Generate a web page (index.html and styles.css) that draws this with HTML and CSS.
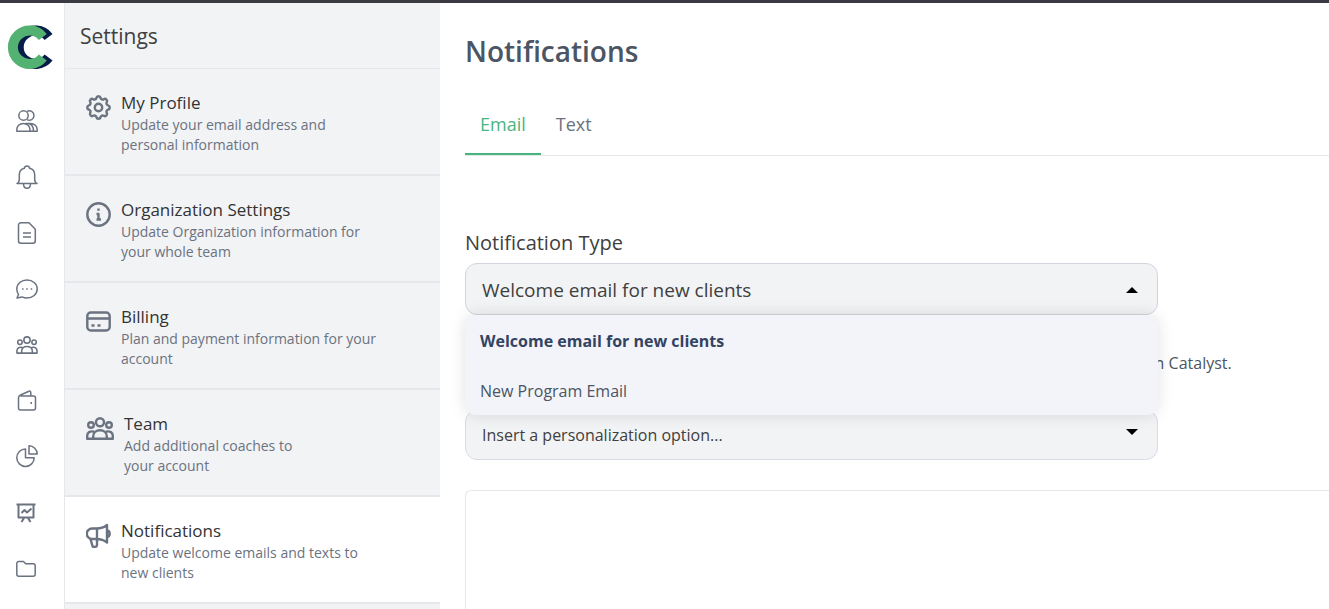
FILE: index.html
```html
<!DOCTYPE html>
<html lang="en">
<head>
<meta charset="UTF-8">
<meta name="viewport" content="width=device-width, initial-scale=1.0">
<title>Settings - Notifications</title>
<link rel="stylesheet" href="styles.css">
</head>
<body>
<div class="app">
    <!-- Icon rail -->
    <nav class="rail">
        <a href="#" class="logo" aria-label="Catalyst">
            <svg width="46" height="46" viewBox="0 0 46 46" fill="none" stroke-width="10">
                <path stroke="#061c49" d="M41.6 12a16.7 16.7 0 1 0 0 20.5"/>
                <path stroke="#53b171" d="M35.8 12a16.7 16.7 0 1 0 0 20.5"/>
            </svg>
        </a>
        <a href="#" aria-label="Clients">
            <svg class="icon" viewBox="0 0 22 22"><circle cx="7.5" cy="5.5" r="4.7"/><path d="M11 1.4a4.7 4.7 0 1 1 0 8.2M.8 21.2v-1.5c0-3.5 2.7-6.2 6.5-6.2s6.7 2.7 6.7 6.2v1.5zM9.5 13.5h5c3.8 0 6.7 2.7 6.7 6.2v1.5H14M12.5 13.5c3.4.8 5 3 5 7.5"/></svg>
        </a>
        <a href="#" aria-label="Alerts">
            <svg class="icon" viewBox="0 0 22 22"><path d="M1 17.5h20c-1.7-.8-2.3-2-2.3-4V9c0-3.6-2-6-5-6.7C13.5.8 12.5 0 11 0S8.5.8 8.3 2.3C5.3 3 3.3 5.4 3.3 9v4.5c0 2-.6 3.2-2.3 4zM7.5 17.7c0 2.8 1.4 4.5 3.5 4.5s3.5-1.7 3.5-4.5"/></svg>
        </a>
        <a href="#" aria-label="Documents">
            <svg class="icon" viewBox="0 0 22 22"><path d="M5 .8h8l6.3 6.4v11.5a2.5 2.5 0 0 1-2.5 2.5H5a2.5 2.5 0 0 1-2.5-2.5V3.3A2.5 2.5 0 0 1 5 .8zM7 11h8M7 15h8"/></svg>
        </a>
        <a href="#" aria-label="Messages">
            <svg class="icon" viewBox="0 0 22 22"><path d="M11 2c5.6 0 10.2 3.8 10.2 9s-4.6 9-10.2 9c-1.8 0-3.5-.4-5-1.1L1 20l1.5-3.5C1.4 15 .8 13 .8 11c0-5.2 4.6-9 10.2-9z"/><path d="M6 11h1.5M10.3 11h1.5M14.7 11h1.5"/></svg>
        </a>
        <a href="#" aria-label="Teams">
            <svg class="icon icon-team" viewBox="0 0 28 25"><use href="#team"/></svg>
        </a>
        <a href="#" aria-label="Wallet">
            <svg class="icon" viewBox="0 0 22 22"><path d="M4.5 6h13a2 2 0 0 1 2 2v10a2 2 0 0 1-2 2h-13a2 2 0 0 1-2-2V8c0-1.5.8-2.5 2-3L13 1.2c1-.3 1.8.2 1.8 1.2V6"/><path d="M14.5 13h1.5" stroke-width="2"/></svg>
        </a>
        <a href="#" aria-label="Reports">
            <svg class="icon" viewBox="0 0 22 22"><path d="M9.5 3a8.7 8.7 0 1 0 8.7 8.7H9.500zM13-.2V8h8.2A8.2 8.2 0 0 0 13-.2z"/></svg>
        </a>
        <a href="#" aria-label="Presentations">
            <svg class="icon icon-bold" viewBox="0 0 22 22"><path d="M.5 2.500h19M2.500 3v12.500h15V3M5.500 11l3-3 2.500 2.500 4.500-4M8 16l-2.500 4M12 16l2.500 4"/></svg>
        </a>
        <a href="#" aria-label="Files">
            <svg class="icon" viewBox="0 0 22 22"><path d="M2.800 3.500h4.700l2.200 2.200h7.500a2 2 0 0 1 2 2v8.500a2 2 0 0 1-2 2H2.800a2 2 0 0 1-2-2V5.500a2 2 0 0 1 2-2z"/></svg>
        </a>
    </nav>

    <!-- Settings menu -->
    <aside class="sidebar">
        <h2>Settings</h2>
        <a href="#" class="item">
            <svg class="item-icon" viewBox="0 0 25 25"><path transform="scale(1.25) translate(-2 -2)" stroke-width="1.95" d="M10.325 4.317c.426-1.756 2.924-1.756 3.35 0a1.724 1.724 0 0 0 2.573 1.066c1.543-.94 3.31.826 2.37 2.37a1.724 1.724 0 0 0 1.065 2.572c1.756.426 1.756 2.924 0 3.35a1.724 1.724 0 0 0-1.066 2.573c.94 1.543-.826 3.31-2.37 2.37a1.724 1.724 0 0 0-2.572 1.065c-.426 1.756-2.924 1.756-3.35 0a1.724 1.724 0 0 0-2.573-1.066c-1.543.94-3.31-.826-2.37-2.37a1.724 1.724 0 0 0-1.065-2.572c-1.756-.426-1.756-2.924 0-3.35a1.724 1.724 0 0 0 1.066-2.573c-.94-1.543.826-3.31 2.37-2.37.996.608 2.296.07 2.572-1.065z"/><circle cx="12.5" cy="12.5" r="3.7"/></svg>
            <div>
                <h3>My Profile</h3>
                <p>Update your email address and<br>personal information</p>
            </div>
        </a>
        <a href="#" class="item">
            <svg class="item-icon" viewBox="0 0 25 25"><circle cx="12.5" cy="12.5" r="11.2"/><path d="M12.5 6.500v2.200M10.500 12h2v5.500M10.500 17.500h4.500"/></svg>
            <div>
                <h3>Organization Settings</h3>
                <p>Update Organization information for<br>your whole team</p>
            </div>
        </a>
        <a href="#" class="item">
            <svg class="item-icon" viewBox="0 0 25 25"><rect x="1.3" y="3.5" width="22.4" height="18" rx="3.5"/><path d="M1.3 9.5h22.4M5.5 16.5h3M11.5 16.5h3"/></svg>
            <div>
                <h3>Billing</h3>
                <p>Plan and payment information for your<br>account</p>
            </div>
        </a>
        <a href="#" class="item">
            <svg class="item-icon item-icon-wide" viewBox="0 0 28 25">
                <g id="team" transform="translate(0 1)"><circle cx="14" cy="5.2" r="4"/><circle cx="5" cy="8" r="2.8"/><circle cx="23" cy="8" r="2.8"/><path d="M7.2 21.8v-2.5c0-3.6 3-6 6.8-6s6.8 2.4 6.8 6v2.5zM8 14.7c-4-1.2-6.8 1-6.8 4v3.1h6M20 14.7c4-1.2 6.8 1 6.8 4v3.1h-6"/></g>
            </svg>
            <div>
                <h3>Team</h3>
                <p>Add additional coaches to<br>your account</p>
            </div>
        </a>
        <a href="#" class="item active">
            <svg class="item-icon" viewBox="0 0 25 25"><path d="M10.500 5.500H6a5 5 0 0 0 0 10.500h4.500c4 0 7.500 1 10.500 3.500V2c-3 2.500-6.500 3.500-10.500 3.500zM11 5.500V16M21 7.500c3.600.5 3.600 6 0 6.500M4.500 16l2 7c.5 1.500 4.500 1.500 4.500-1V16"/></svg>
            <div>
                <h3>Notifications</h3>
                <p>Update welcome emails and texts to<br>new clients</p>
            </div>
        </a>
    </aside>

    <main class="content">
        <h1>Notifications</h1>
        <div class="tabs">
            <button class="tab selected" type="button">Email</button>
            <button class="tab" type="button">Text</button>
        </div>

        <label for="type">Notification Type</label>
        <div class="select-box open">
            <select id="type">
                <option>Welcome email for new clients</option>
                <option>New Program Email</option>
            </select>
            <ul class="menu">
                <li><button class="chosen" type="button">Welcome email for new clients</button></li>
                <li><button type="button">New Program Email</button></li>
            </ul>
        </div>

        <p class="hint">This is the email new clients will automatically receive when you first add them to our team on Catalyst.</p>

        <div class="select-box">
            <select class="small" aria-label="Personalization option">
                <option>Insert a personalization option...</option>
            </select>
        </div>
        <textarea class="editor" aria-label="Email text"></textarea>
    </main>
</div>
</body>
</html>
```

FILE: styles.css
```css
* {
    box-sizing: border-box;
}
body {
    margin: 0;
    font-family: "Open Sans", "Noto Sans", sans-serif;
    color: #404040;
    background-color: #fff;
}
h1, h2, h3, p, ul {
    margin: 0;
    padding: 0;
}
button, select, textarea {
    font-family: inherit;
    margin: 0;
}
.app {
    display: flex;
    height: 100vh;
    border-top: 3px solid #3b3a43;
    overflow: hidden;
}

/* Icon rail */
.rail {
    flex: 0 0 64px;
    display: flex;
    flex-direction: column;
    gap: 34px;
    padding: 22px 0 0 16px;
}
.rail a {
    display: block;
    height: 22px;
}
.rail .logo {
    height: 46px;
    margin: 0 0 5px -9px;
}
.icon {
    display: block;
    width: 22px;
    height: 22px;
    fill: none;
    stroke: #6b7280;
    stroke-width: 1.5;
    stroke-linejoin: round;
    overflow: visible;
}
.icon-bold,
.icon-team {
    stroke-width: 2;
}

/* Settings menu */
.sidebar {
    flex: 0 0 376px;
    background-color: #f2f3f5;
    border-left: 1px solid #e5e7eb;
    overflow: hidden;
}
.sidebar h2 {
    height: 66px;
    padding-left: 15px;
    border-bottom: 1px solid #e5e7eb;
    font-size: 21px;
    font-weight: 400;
    line-height: 66px;
}
.item {
    display: flex;
    gap: 10px;
    padding: 22px 16px 19px 21px;
    border-bottom: 2px solid #e5e7eb;
    color: #6b7280;
    text-decoration: none;
}
.item.active {
    background-color: #fff;
}
.item-icon {
    flex: none;
    width: 25px;
    height: 25px;
    margin-top: 4px;
    fill: none;
    stroke: #6b7280;
    stroke-width: 2.4;
    stroke-linejoin: round;
}
.item-icon-wide {
    width: 28px;
}
.item h3 {
    color: #333;
    font-size: 17px;
    font-weight: 400;
    line-height: 24px;
}
.item p {
    font-size: 14px;
    line-height: 20px;
}

/* Notifications page */
.content {
    flex: 1;
    min-width: 0;
    padding: 28px 0 0 25px;
}
h1 {
    color: #4b5563;
    font-size: 28px;
    font-weight: 600;
    line-height: 40px;
}
.tabs {
    display: flex;
    margin-top: 22px;
    border-bottom: 1px solid #e5e7eb;
}
.tab {
    height: 62px;
    padding: 2px 15px 0;
    border: 0;
    border-bottom: 2px solid transparent;
    background: none;
    color: #6b7280;
    font-size: 18px;
    cursor: pointer;
}
.tab.selected {
    border-color: #48b581;
    color: #48b581;
}
label {
    display: block;
    margin: 73px 0 6px;
    font-size: 20px;
    line-height: 28px;
}
.select-box {
    position: relative;
    max-width: 693px;
}
.select-box::after {
    content: "";
    position: absolute;
    top: 19px;
    right: 20px;
    border: 6px solid transparent;
    border-top-color: #000;
    border-bottom: 0;
}
.select-box.open::after {
    top: 24px;
    border: 6px solid transparent;
    border-bottom-color: #000;
    border-top: 0;
}
select {
    display: block;
    width: 100%;
    height: 52px;
    padding: 2px 16px 0;
    border: 1px solid #d1d5db;
    border-radius: 12px;
    background-color: #f2f3f5;
    color: #404040;
    font-size: 19px;
    appearance: none;
}
select.small {
    height: 50px;
    padding-top: 0;
    border-color: #d9dce6;
    font-size: 16px;
}
.menu {
    position: absolute;
    top: 52px;
    left: 0;
    width: 100%;
    border-radius: 10px;
    background-color: #f3f4f9;
    box-shadow: 0 0 16px rgba(0, 0, 0, 0.12);
    list-style: none;
    z-index: 1;
}
.menu button {
    width: 100%;
    height: 50px;
    padding: 2px 15px 0;
    border: 0;
    background: none;
    color: #4b5563;
    font-size: 16px;
    text-align: left;
}
.menu .chosen {
    color: #334463;
    font-weight: 700;
}
.hint {
    margin: 36px 0 35px;
    color: #4b5563;
    font-size: 16px;
    line-height: 24px;
    white-space: nowrap;
}
.editor {
    display: block;
    width: 100%;
    height: 320px;
    margin-top: 30px;
    border: 1px solid #e5e7eb;
    border-right: 0;
    border-radius: 6px 0 0 6px;
    resize: none;
}
```
